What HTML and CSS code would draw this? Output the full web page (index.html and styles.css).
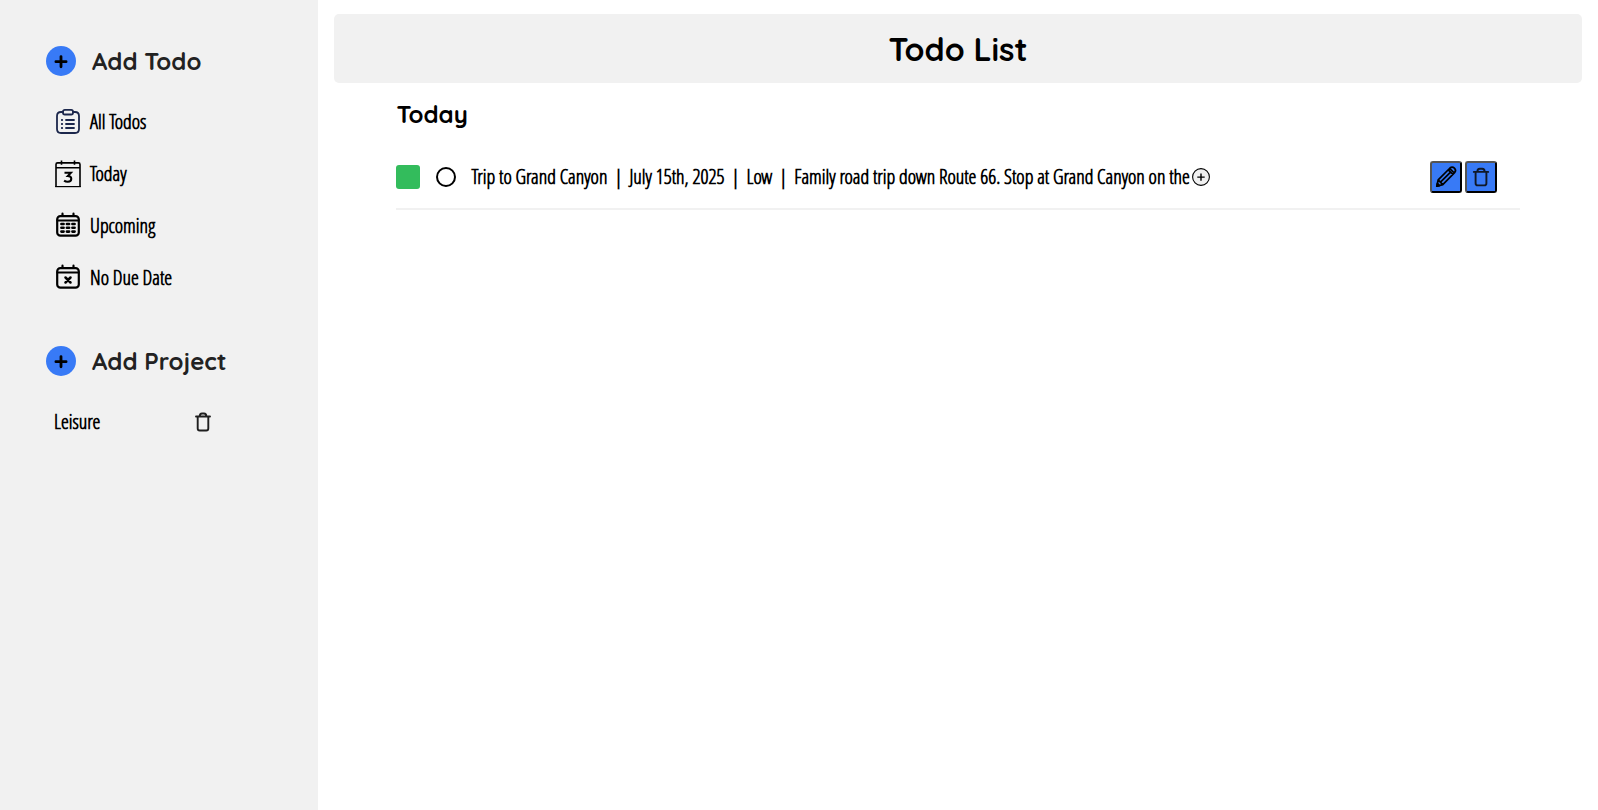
FILE: index.html
```html
<!DOCTYPE html>
<html lang="en">
<head>
<meta charset="utf-8">
<meta name="viewport" content="width=device-width, initial-scale=1">
<title>Todo List</title>
<link rel="stylesheet" href="styles.css">
</head>
<body>
<aside class="sidebar">
  <button class="add" type="button">
    <svg class="add-icon" viewBox="0 0 30 30"><circle cx="15" cy="15" r="15" fill="#387af6"/><path d="M15 10.6v10.2M9.9 15.7h10.2" stroke="#000" stroke-width="2.8" stroke-linecap="round"/></svg>
    <span class="add-label">Add Todo</span>
  </button>
  <nav class="filters">
    <button class="filter" type="button">
      <svg class="icon" viewBox="0 0 26 28" fill="none" stroke="#1c274c" stroke-width="1.8" stroke-linecap="round"><path d="M8 4H6Q2 4 2 8v13q0 4 4 4h14q4 0 4-4V8q0-4-4-4h-2"/><rect x="8" y="1.9" width="10" height="4.6" rx="1.8"/><path d="M11 12h8M11 16h8M11 20h8M6.8 12h.4M6.8 16h.4M6.8 20h.4"/></svg>
      <span>All Todos</span>
    </button>
    <button class="filter" type="button">
      <svg class="icon" viewBox="0 0 26 28" fill="none" stroke="#000" stroke-width="1.6"><path d="M1 27V4.5q0-1.6 1.6-1.6h20.8q1.6 0 1.6 1.6V27M1 7.7h24M6.5.5v4.2M19.5.5v4.2"/><path d="M.2 26.6h25.6" stroke-width="1.2"/><path d="M9.5 12.8h6.4L12.8 16q3.5.1 3.5 2.8 0 3-3.5 3-2.2 0-3.7-1.2" stroke-width="2"/></svg>
      <span>Today</span>
    </button>
    <button class="filter" type="button">
      <svg class="icon" viewBox="0 0 26 28" fill="none" stroke="#000" stroke-width="2.2" stroke-linecap="round"><path d="M7.5 1.7v2M18.5 1.7v2M2.5 8.5h21"/><rect x="2.2" y="4.1" width="21.6" height="19.6" rx="3.2"/><path d="M6.4 12h2.2M11.9 12h2.2M17.4 12h2.2M6.4 15.8h2.2M11.9 15.8h2.2M17.4 15.8h2.2M6.4 19.6h2.2M11.9 19.6h2.2M17.4 19.6h2.2" stroke-width="2.6"/></svg>
      <span>Upcoming</span>
    </button>
    <button class="filter" type="button">
      <svg class="icon" viewBox="0 0 26 28" fill="none" stroke="#000" stroke-width="2.2" stroke-linecap="round"><path d="M7.5 1.7v2M18.5 1.7v2M2.5 8.5h21"/><rect x="2.2" y="4.1" width="21.6" height="19.6" rx="3.2"/><path d="m10.5 13.5 5 5m0-5-5 5" stroke-width="2.5"/></svg>
      <span>No Due Date</span>
    </button>
  </nav>
  <button class="add" type="button">
    <svg class="add-icon" viewBox="0 0 30 30"><circle cx="15" cy="15" r="15" fill="#387af6"/><path d="M15 10.6v10.2M9.9 15.7h10.2" stroke="#000" stroke-width="2.8" stroke-linecap="round"/></svg>
    <span class="add-label">Add Project</span>
  </button>
  <div class="project">
    <button class="project-name" type="button">Leisure</button>
    <button class="project-delete" type="button" aria-label="Delete project">
      <svg viewBox="0 0 16 20" fill="none" stroke="#1f1f1f" stroke-width="1.9" stroke-linecap="round"><path d="M1 4.5h14M2.7 4.7v11.8q0 2 2 2h6.6q2 0 2-2V4.7M4.7 4.2Q4.7 1.5 7 1.5h2q2.3 0 2.3 2.7"/></svg>
    </button>
  </div>
</aside>
<main class="main">
  <header class="header"><h1 class="title">Todo List</h1></header>
  <section class="todos">
    <h2 class="heading">Today</h2>
    <div class="todo">
      <span class="priority"></span>
      <input class="done" type="checkbox" aria-label="Trip to Grand Canyon done">
      <div class="details">
        <span>Trip to Grand Canyon</span><span>|</span><span>July 15th, 2025</span><span>|</span><span>Low</span><span>|</span><span class="description">Family road trip down Route 66. Stop at Grand Canyon on the</span>
      </div>
      <button class="expand" type="button" aria-label="Show more">
        <svg viewBox="0 0 18 18" fill="#f1f1f1" stroke="#000"><circle cx="9" cy="9" r="8.4" stroke-width="1.1"/><path d="M9 5.4v7.4M5.3 9.1h7.4" stroke-width="1.4"/></svg>
      </button>
      <div class="actions">
        <button class="action" type="button" aria-label="Edit">
          <svg viewBox="0 0 28 28" fill="none" stroke="#000" stroke-width="1.7" stroke-linejoin="round"><path d="m4.8 23.2 1.4-6.4L18 5q2.2-2 4.4.2t.2 4.4L10.8 21.6zM6.2 16.8l4.6 4.8M16.2 6.8l4.8 4.6M17.6 5.4l4.8 4.6M8.5 19.2 18.6 9.2"/><path d="m4.8 23.2.6-2.8 2.1 2.2z" fill="#000"/></svg>
        </button>
        <button class="action" type="button" aria-label="Delete">
          <svg viewBox="0 0 28 28" fill="none" stroke="#101827" stroke-width="1.9" stroke-linecap="round"><path d="M6.8 8.9h14.4M8.6 9v11.2q0 2.2 2.2 2.2h6.4q2.2 0 2.2-2.2V9M10.4 8.6q0-2.8 2.4-2.8h2.4q2.4 0 2.4 2.8"/></svg>
        </button>
      </div>
    </div>
  </section>
</main>
</body>
</html>
```
FILE: styles.css
```css
* {
  box-sizing: border-box;
}

body {
  margin: 0;
  min-height: 100vh;
  display: flex;
  background: #fff;
  color: #000;
  font-family: "Open Sans Condensed Light", "Roboto Condensed", sans-serif;
  font-size: 20px;
  font-weight: 700;
  line-height: 28px;
}

button {
  margin: 0;
  padding: 0;
  border: 0;
  background: none;
  color: inherit;
  font: inherit;
  cursor: pointer;
}

svg {
  display: block;
}

.sidebar {
  flex: 0 0 318px;
  padding: 40px 46px;
  background: #f1f1f1;
}

.add {
  display: flex;
  align-items: center;
  gap: 16px;
  height: 42px;
}

.add-icon {
  width: 30px;
  height: 30px;
}

.add-label {
  color: #222;
  font-family: Quicksand, Lato, sans-serif;
  font-size: 24px;
  font-weight: 700;
}

.filters {
  display: grid;
  gap: 24px;
  padding: 26px 9px 48px;
}

.filter {
  display: flex;
  align-items: center;
  gap: 9px;
}

.icon {
  width: 26px;
  height: 28px;
}

.project {
  display: flex;
  align-items: center;
  justify-content: space-between;
  width: 165px;
  padding: 26px 0 0 8px;
}

.project-delete svg {
  width: 16px;
  height: 20px;
}

.main {
  flex: 1;
  min-width: 0;
  padding: 14px 16px;
}

.header {
  padding: 15px 14px 13px;
  border-radius: 5px;
  background: #f1f1f1;
  text-align: center;
}

.title {
  margin: 0;
  font-family: Quicksand, Lato, sans-serif;
  font-size: 32px;
  line-height: 41px;
  font-weight: 700;
}

.todos {
  width: 90%;
  margin: 0 auto;
}

.heading {
  margin: 15px 0 31px;
  font-family: Quicksand, Lato, sans-serif;
  font-size: 24px;
  line-height: 32px;
  font-weight: 700;
}

.todo {
  display: flex;
  align-items: center;
  padding-right: 23px;
  padding-bottom: 15px;
  border-bottom: 2px solid #f1f1f1;
}

.priority {
  flex: none;
  width: 24px;
  height: 24px;
  margin-right: 16px;
  border-radius: 3px;
  background: #33bc5c;
}

.done {
  appearance: none;
  flex: none;
  width: 20px;
  height: 20px;
  margin: 0 15px 0 0;
  border: 2px solid #000;
  border-radius: 50%;
}

.details {
  display: flex;
  gap: 7px;
  white-space: nowrap;
}

.expand {
  margin-left: 2px;
}

.expand svg {
  width: 18px;
  height: 18px;
}

.actions {
  display: flex;
  gap: 3px;
  margin-left: auto;
}

.action {
  width: 32px;
  height: 32px;
  border: 2px outset #000;
  border-radius: 3px;
  background: #387af6;
}
```
